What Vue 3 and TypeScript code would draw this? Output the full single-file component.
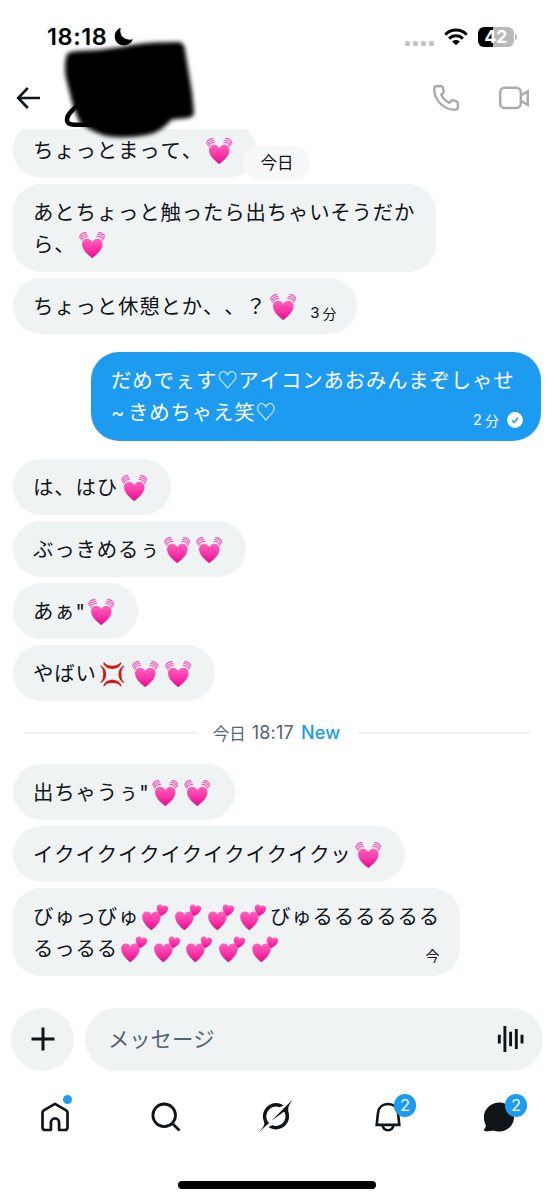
<script setup lang="ts">
type Part =
  | { kind: 'text'; value: string }
  | { kind: 'latin'; value: string }
  | { kind: 'beat' | 'hearts' | 'anger' | 'break' }

interface Message {
  id: number
  parts: Part[]
  own?: boolean
  num?: string
  unit?: string
  inline?: boolean
}

const t = (value: string): Part => ({ kind: 'text', value })
const l = (value: string): Part => ({ kind: 'latin', value })
const beat: Part = { kind: 'beat' }
const hearts: Part = { kind: 'hearts' }
const anger: Part = { kind: 'anger' }
const br: Part = { kind: 'break' }

const earlier: Message[] = [
  { id: 1, parts: [t('ちょっとまって、'), beat] },
  { id: 2, parts: [t('あとちょっと触ったら出ちゃいそうだか'), br, t('ら、'), beat] },
  { id: 3, parts: [t('ちょっと休憩とか、、？'), beat], num: '3', unit: '分', inline: true },
  { id: 4, own: true, parts: [t('だめでぇす♡アイコンあおみんまぞしゃせ'), br, l('~'), t('きめちゃえ笑♡')], num: '2', unit: '分' },
  { id: 5, parts: [t('は、はひ'), beat] },
  { id: 6, parts: [t('ぶっきめるぅ'), beat, beat] },
  { id: 7, parts: [t('あぁ'), l('"'), beat] },
  { id: 8, parts: [t('やばい'), anger, beat, beat] },
]

const recent: Message[] = [
  { id: 9, parts: [t('出ちゃうぅ'), l('"'), beat, beat] },
  { id: 10, parts: [t('イクイクイクイクイクイクイクッ'), beat] },
  {
    id: 11,
    parts: [t('びゅっびゅ'), hearts, hearts, hearts, hearts, t('びゅるるるるるる'), br, t('るっるる'), hearts, hearts, hearts, hearts, hearts],
    unit: '今',
  },
]

const groups = [
  { name: 'earlier', items: earlier },
  { name: 'recent', items: recent },
]
</script>

<template>
  <div class="screen">
    <svg class="defs" width="0" height="0" aria-hidden="true">
      <defs>
        <linearGradient id="pink" x1="0" y1="0" x2="0" y2="1">
          <stop offset="0" stop-color="#ff62bd" />
          <stop offset="0.5" stop-color="#fb36a9" />
          <stop offset="1" stop-color="#df0c91" />
        </linearGradient>
        <symbol id="beat" viewBox="0 0 27 27">
          <path fill="url(#pink)" d="M13.5 26.6C10.4 24 3.1 18.8 3.1 12.5 3.1 9 5.4 6.9 8.2 6.9c2.4 0 4.3 1.3 5.3 3.3 1-2 2.9-3.3 5.3-3.3 2.8 0 5.1 2.1 5.1 5.6 0 6.3-7.300 11.500-10.400 14.100z" />
          <g fill="none" stroke="#f64db2" stroke-width="1.150" stroke-linecap="round">
            <path d="M.6 5.200C1.600 2.600 4 .8 7 .7M1.600 6.900C2.600 4.300 5 2.600 8 2.500M2.700 8.300C3.700 6 6 4.400 8.900 4.300" />
            <path d="M26.400 5.200C25.400 2.600 23 .8 20 .7M25.400 6.900C24.400 4.300 22 2.600 19 2.500M24.300 8.300C23.300 6 21 4.400 18.100 4.300" />
          </g>
        </symbol>
        <symbol id="hearts" viewBox="0 0 27 27">
          <path fill="url(#pink)" d="M9.500 26.600C6.500 24.200.2 19 .2 13 .2 9.700 2.300 7.700 4.900 7.700c2.100 0 3.800 1.200 4.700 3 .9-1.800 2.600-3 4.700-3 2.600 0 4.700 2 4.700 5.200 0 6.100-6.500 11.300-9.500 13.700z" />
          <path fill="url(#pink)" d="M19.400 12.400C18 10.400 14.500 6.900 15 3.400c.3-2 1.700-3.100 3.400-2.800 1.300.2 2.200 1.100 2.600 2.300.8-1 2-1.500 3.300-1.200 1.700.4 2.600 1.900 2.200 3.700-.8 3.500-4.900 5.900-7.100 7z" />
        </symbol>
        <symbol id="anger" viewBox="0 0 27 27">
          <path
            fill="#dc1410"
            d="M4.200 1.200C6.500 4.400 9.300 4.700 12.500 4.700s6.200-.4 8.500-3.500l1 .5C20.200 5.900 17 8 12.600 8S4.900 5.900 3.200 1.700zM4.200 25.800C6.500 22.600 9.300 22.300 12.500 22.300s6.200.4 8.500 3.500l1-.5C20.200 21.100 17 19 12.600 19s-7.700 2.100-9.400 6.300zM.3 5.600C3.300 7.600 3.200 10.500 3.200 13.500s0 5.900-2.900 7.900l.5 1C4.700 20.300 6.200 17.400 6.200 13.500S4.700 6.700.8 4.600zM24.700 5.600C21.700 7.600 21.800 10.500 21.800 13.500s0 5.900 2.900 7.900l-.5 1C20.300 20.300 18.800 17.400 18.800 13.500s1.500-6.800 5.400-8.900z"
          />
        </symbol>
      </defs>
    </svg>

    <header class="top">
      <div class="status">
        <span class="clock">18:18</span>
        <svg class="moon" width="20" height="20" viewBox="0 0 20 20">
          <path d="M6.800.8C4.700 6.800 9.200 14.300 18.800 12.300 17.300 16.300 13.900 18.500 10 18.500 4.800 18.500.7 14.600.7 9.500.7 5.400 3.200 2.100 6.800.8z" />
        </svg>
        <span class="cell"><i></i><i></i><i></i><i></i></span>
        <svg class="wifi" width="24" height="18" viewBox="0 0 24 18">
          <g fill="none" stroke="#000" stroke-width="3">
            <path d="M1.300 6.700C7.300.5 16.700.5 22.700 6.700" />
            <path d="M5.100 10.600C9 6.700 15 6.700 18.900 10.600" />
          </g>
          <path d="M12 17.300L8.100 13.400C10.300 11.400 13.700 11.400 15.900 13.400z" />
        </svg>
        <span class="battery">42</span>
        <span class="nub"></span>
      </div>
      <div class="bar">
        <svg width="26" height="24" viewBox="0 0 26 24" fill="none" stroke="#0f1419" stroke-width="2.600">
          <path d="M25 12H4M12.800 2L3.200 12 12.800 22" />
        </svg>
        <span class="spacer"></span>
        <svg class="phone" width="28" height="28" viewBox="0 0 28 28" fill="none" stroke="#a9abae" stroke-width="2.400" stroke-linejoin="round">
          <path d="M4 2.200h5.200c.8 0 1.300.5 1.500 1.200l1 4.100c.2.700 0 1.200-.5 1.600L9.300 10.500c1.700 3.900 4.500 6.700 8.300 8.300l1.600-1.900c.4-.5.9-.7 1.600-.5l4 1.100c.7.2 1.100.7 1.100 1.400v4.200c0 1.600-1.200 2.700-2.800 2.700C11.500 25.800 2.200 16.200 2.200 4.400 2.200 3.200 2.900 2.200 4 2.200z" />
        </svg>
        <svg width="32" height="24" viewBox="0 0 32 24" fill="none" stroke="#a9abae" stroke-width="2.500">
          <rect x="2.200" y="1.800" width="20.600" height="20.200" rx="4.500" />
          <path d="M22.800 9.300L29.800 5.400V18.800L22.800 14.900" />
        </svg>
      </div>
      <svg class="scribble" width="150" height="110" viewBox="55 35 150 110">
        <defs>
          <filter id="soft" x="-10%" y="-10%" width="120%" height="120%">
            <feGaussianBlur stdDeviation="2.300" />
          </filter>
        </defs>
        <path
          filter="url(#soft)"
          d="M67 54C72 50 84 51 98 50C120 48 138 43 155 42.500L178 42Q184 42 185 50L192 92L194 112Q194 117 188 118L172 119.500C166 125 163 130 151 134C136 138 118 138 106 136C94 132 82 126 79 121L73 106L65.500 76Q64 62 67 54Z"
        />
        <path d="M80 104C71 110 65.500 117 67.500 122C69 126 79 124.500 92 124.500" fill="none" stroke="#000" stroke-width="4.500" />
      </svg>
    </header>

    <main class="thread">
      <span class="day-pill">今日</span>
      <template v-for="g in groups" :key="g.name">
        <div v-if="g.name === 'recent'" class="divider">
          <span>今日</span><b>18:17</b><b class="new">New</b>
        </div>
        <div v-for="m in g.items" :key="m.id" class="bubble" :class="{ own: m.own }">
          <p>
            <template v-for="(p, i) in m.parts" :key="i">
              <template v-if="p.kind === 'text'">{{ p.value }}</template>
              <span v-else-if="p.kind === 'latin'" class="latin" :class="{ tilde: p.value === '~' }">{{ p.value }}</span>
              <br v-else-if="p.kind === 'break'" />
              <svg v-else class="emoji"><use :href="'#' + p.kind" /></svg>
            </template>
          </p>
          <span v-if="m.unit" class="time" :class="{ inline: m.inline }">
            <b v-if="m.num">{{ m.num }}</b>{{ m.unit }}
            <svg v-if="m.own" class="check" width="16" height="16" viewBox="0 0 16 16">
              <circle cx="8" cy="8" r="7.900" fill="#fff" />
              <path d="M5 8.400L7.200 10.500 11 5.800" fill="none" stroke="#1d9bf0" stroke-width="1.500" />
            </svg>
          </span>
        </div>
      </template>
    </main>

    <section class="composer">
      <button class="plus" type="button" aria-label="追加">
        <svg width="24" height="24" viewBox="0 0 24 24" fill="none" stroke="#0f1419" stroke-width="3">
          <path d="M12 .5v23M.5 12h23" />
        </svg>
      </button>
      <div class="field">
        <span>メッセージ</span>
        <svg width="28" height="28" viewBox="0 0 28 28" fill="none" stroke="#0f1419" stroke-width="2.900">
          <path d="M2.300 9.800v8.800M7.900 1v26M13.600 6.800v14.400M19.300 4v20M25 9.800v8.800" />
        </svg>
      </div>
    </section>

    <nav class="tabs">
      <span class="tab">
        <svg width="30" height="30" viewBox="0 0 30 30" fill="none" stroke="#0f1419" stroke-width="2.700" stroke-linejoin="round">
          <path d="M15 1.900L26.200 8.300Q27.500 9.100 27.500 10.600V25.200Q27.500 28 24.700 28H19.100V20.500A4.100 4.100 0 0 0 10.900 20.500V28H5.300Q2.500 28 2.500 25.200V10.600Q2.500 9.100 3.800 8.300Z" />
        </svg>
        <i class="dot"></i>
      </span>
      <span class="tab">
        <svg width="30" height="30" viewBox="0 0 30 30" fill="none" stroke="#0f1419" stroke-width="2.800">
          <circle cx="13.200" cy="13.300" r="11.300" />
          <path d="M21.200 21.300L28.500 28.600" />
        </svg>
      </span>
      <span class="tab">
        <svg class="orbit" width="35" height="34" viewBox="0 0 33 32" fill="#0f1419">
          <path d="M12.745 20.540l10.970-8.190c.539-.4 1.307-.244 1.564.38 1.349 3.288.746 7.241-1.938 9.955-2.683 2.714-6.417 3.310-9.830 1.954l-3.728 1.745c5.347 3.697 11.840 2.782 15.898-1.324 3.219-3.255 4.216-7.692 3.284-11.693l.008.009c-1.351-5.878.332-8.227 3.782-13.031L33 0l-4.540 4.590v-.014L12.743 20.544m-2.263 1.987c-3.837-3.707-3.175-9.446.1-12.755 2.420-2.449 6.388-3.448 9.852-1.979l3.720-1.737c-.67-.49-1.530-1.017-2.515-1.387-4.455-1.854-9.789-.931-13.410 2.728-3.483 3.523-4.579 8.940-2.697 13.561 1.405 3.454-.899 5.898-3.220 8.364C1.490 30.200.666 31.074 0 32l10.478-9.466" />
        </svg>
      </span>
      <span class="tab">
        <svg width="30" height="30" viewBox="0 0 30 30" fill="none" stroke="#0f1419" stroke-width="2.600">
          <path d="M3.700 22.900L4.900 11.300C5.500 5.600 9.500 2 15 2S24.500 5.600 25.100 11.300L26.300 22.900Z" />
          <path d="M9.500 23.500C10.200 26.500 12.200 28.200 15 28.200S19.800 26.500 20.500 23.500" />
        </svg>
        <b class="badge">2</b>
      </span>
      <span class="tab">
        <svg width="32" height="30" viewBox="0 0 32 30" fill="#0f1419">
          <path d="M16.300.5C24.700.5 31 7 31 15S24.700 29.500 16.300 29.500C14 29.500 12.200 29.100 10.800 28.400 7.800 29.200 4.200 29.500 1.800 29 .7 28.700.6 27.900 1.300 27.100 2.300 26 2.900 24.500 2.700 22.900 1.400 20.500.9 17.900.9 15 .9 7 7.900.5 16.300.5z" />
        </svg>
        <b class="badge">2</b>
      </span>
    </nav>
    <div class="home-bar"></div>
  </div>
</template>

<style>
body {
  margin: 0;
  background: #fff;
}
</style>

<style scoped>
.screen {
  width: 554px;
  height: 1200px;
  position: relative;
  overflow: hidden;
  display: flex;
  flex-direction: column;
  background: #fff;
  color: #0f1419;
  font-family: 'Noto Sans CJK JP', Inter, sans-serif;
  text-spacing-trim: space-all;
  font-kerning: none;
}
.defs {
  position: absolute;
}
svg {
  display: block;
  flex: none;
}
.top {
  height: 129px;
  flex: none;
  position: relative;
  z-index: 2;
  background: #fff;
}
.status {
  height: 74px;
  box-sizing: border-box;
  padding: 0 37.500px 0 47px;
  display: flex;
  align-items: center;
  color: #000;
}
.clock {
  font: 600 23.500px/28px Inter, sans-serif;
  letter-spacing: 0.6px;
  width: 67px;
}
.cell {
  display: flex;
  gap: 2.700px;
  margin: 12px 10px 0 auto;
}
.cell i {
  width: 5px;
  height: 5px;
  border-radius: 1.500px;
  background: #c4c4c6;
}
.wifi {
  margin-right: 10px;
}
.battery {
  width: 36px;
  height: 20px;
  border-radius: 6px;
  background: linear-gradient(90deg, #000 43%, #b9b9bb 43%);
  color: #fff;
  font: 700 18px/20px Inter, sans-serif;
  letter-spacing: -0.5px;
  text-align: center;
}
.nub {
  width: 2px;
  height: 6px;
  margin-left: 1px;
  border-radius: 0 2px 2px 0;
  background: #b9b9bb;
}
.bar {
  height: 48px;
  padding: 0 24px 0 15px;
  display: flex;
  align-items: center;
}
.spacer {
  flex: 1;
}
.phone {
  margin-right: 38px;
}
.scribble {
  position: absolute;
  left: 55px;
  top: 35px;
}
.thread {
  position: relative;
  height: 854px;
  flex: none;
  display: flex;
  flex-direction: column;
  align-items: flex-start;
  gap: 6.150px;
  margin-top: -7px;
  padding: 0 13px;
}
.day-pill {
  position: absolute;
  z-index: 1;
  left: 243px;
  top: 24px;
  width: 68px;
  height: 34px;
  border-radius: 17px;
  background: #f7f9f9;
  font-size: 16.500px;
  line-height: 33px;
  text-align: center;
}
.bubble {
  position: relative;
  flex: none;
  display: flex;
  box-sizing: border-box;
  padding: 11px 20.500px 13px 20px;
  border-radius: 28px;
  background: #eff3f4;
}
.bubble p {
  margin: 0;
  font-size: 20.400px;
  letter-spacing: 0.850px;
  line-height: 32px;
  white-space: nowrap;
}
.bubble.own {
  align-self: flex-end;
  width: 450px;
  margin: 12px 0;
  padding-bottom: 13.500px;
  background: #1d9bf0;
  color: #fff;
}
.latin {
  font-family: Inter, sans-serif;
  letter-spacing: 0;
  line-height: 1;
}
.tilde {
  display: inline-block;
  width: 17px;
}
.emoji {
  display: inline-block;
  width: 26.600px;
  height: 26.600px;
  margin: -8px 3.050px;
  vertical-align: 1.500px;
}
.time {
  position: absolute;
  right: 21px;
  bottom: 9px;
  display: flex;
  align-items: center;
  font-size: 14px;
  line-height: 24px;
}
.time.inline {
  position: static;
  align-self: flex-end;
  margin: 0 0 -4px 11px;
}
.time b {
  font: 400 15px/24px Inter, sans-serif;
  margin-right: 3px;
}
.own .time {
  right: 18px;
}
.check {
  margin-left: 8px;
}
.divider {
  flex: none;
  align-self: stretch;
  height: 50px;
  margin: 0 11px;
  display: flex;
  align-items: center;
  color: #536471;
  font-size: 16.500px;
  white-space: nowrap;
}
.divider::before,
.divider::after {
  content: '';
  flex: 1;
  height: 2px;
  background: #eff3f4;
}
.divider::before {
  margin-right: 16px;
}
.divider::after {
  margin-left: 17px;
}
.divider b {
  margin-left: 6px;
  font: 400 18px/24px Inter, sans-serif;
  letter-spacing: 0.2px;
}
.divider .new {
  margin-left: 7px;
  font-weight: 500;
  color: #1d9bf0;
}
.composer {
  display: flex;
  gap: 11px;
  margin: 32px 11px 0;
}
.plus {
  width: 63px;
  height: 63px;
  padding: 0 0 1px;
  border: 0;
  border-radius: 50%;
  background: #eff3f4;
  display: grid;
  place-items: center;
}
.field {
  flex: 1;
  height: 63px;
  box-sizing: border-box;
  padding: 0 18px 1px 23px;
  border-radius: 32px;
  background: #eff3f4;
  display: flex;
  align-items: center;
  justify-content: space-between;
  color: #536471;
  font-size: 21.300px;
}
.field span {
  margin-bottom: 3px;
}
.tabs {
  display: grid;
  grid-template-columns: repeat(5, 1fr);
  height: 92px;
}
.tab {
  position: relative;
  display: grid;
  place-items: center;
}
.orbit {
  margin: 0 2px 3px 0;
}
.dot {
  position: absolute;
  left: 62.500px;
  top: 24px;
  width: 9px;
  height: 9px;
  border-radius: 50%;
  background: #1d9bf0;
}
.badge {
  position: absolute;
  left: 61.500px;
  top: 23px;
  width: 22.500px;
  height: 22.500px;
  border-radius: 50%;
  background: #1d9bf0;
  color: #fff;
  font: 400 16.500px/22.500px Inter, sans-serif;
  text-align: center;
}
.home-bar {
  width: 198px;
  height: 8px;
  margin: 18px auto 0;
  border-radius: 4px;
  background: #000;
}
</style>
